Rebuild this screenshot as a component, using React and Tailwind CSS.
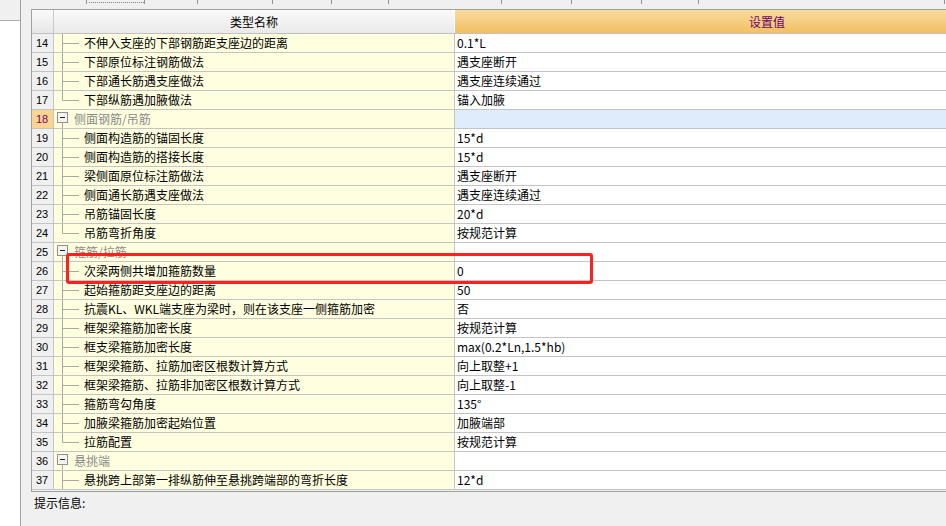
import React from 'react';

const rows = [
  { n: 14, name: '不伸入支座的下部钢筋距支座边的距离', value: '0.1*L' },
  { n: 15, name: '下部原位标注钢筋做法', value: '遇支座断开' },
  { n: 16, name: '下部通长筋遇支座做法', value: '遇支座连续通过' },
  { n: 17, name: '下部纵筋遇加腋做法', value: '锚入加腋', last: true },
  { n: 18, name: '侧面钢筋/吊筋', group: true, selected: true },
  { n: 19, name: '侧面构造筋的锚固长度', value: '15*d' },
  { n: 20, name: '侧面构造筋的搭接长度', value: '15*d' },
  { n: 21, name: '梁侧面原位标注筋做法', value: '遇支座断开' },
  { n: 22, name: '侧面通长筋遇支座做法', value: '遇支座连续通过' },
  { n: 23, name: '吊筋锚固长度', value: '20*d' },
  { n: 24, name: '吊筋弯折角度', value: '按规范计算', last: true },
  { n: 25, name: '箍筋/拉筋', group: true },
  { n: 26, name: '次梁两侧共增加箍筋数量', value: '0' },
  { n: 27, name: '起始箍筋距支座边的距离', value: '50' },
  { n: 28, name: '抗震KL、WKL端支座为梁时，则在该支座一侧箍筋加密', value: '否' },
  { n: 29, name: '框架梁箍筋加密长度', value: '按规范计算' },
  { n: 30, name: '框支梁箍筋加密长度', value: 'max(0.2*Ln,1.5*hb)' },
  { n: 31, name: '框架梁箍筋、拉筋加密区根数计算方式', value: '向上取整+1' },
  { n: 32, name: '框架梁箍筋、拉筋非加密区根数计算方式', value: '向上取整-1' },
  { n: 33, name: '箍筋弯勾角度', value: '135°' },
  { n: 34, name: '加腋梁箍筋加密起始位置', value: '加腋端部' },
  { n: 35, name: '拉筋配置', value: '按规范计算', last: true },
  { n: 36, name: '悬挑端', group: true },
  { n: 37, name: '悬挑跨上部第一排纵筋伸至悬挑跨端部的弯折长度', value: '12*d' },
];

const tabs = [66, 58, 53, 75, 59, 57, 113, 70, 70, 57, 246];

function ChildLines({ last }) {
  return (
    <svg width="30" height="18" className="shrink-0">
      <line x1="8.5" y1="0" x2="8.5" y2={last ? 9.5 : 18} stroke="#a8a8a8" />
      <line x1="8.5" y1="9.5" x2="25" y2="9.5" stroke="#a8a8a8" />
    </svg>
  );
}

function GroupBox() {
  return (
    <svg width="20" height="18" className="shrink-0">
      <rect x="3.5" y="2.5" width="10" height="10" fill="#f4f4f4" stroke="#909090" />
      <line x1="6" y1="7.5" x2="11" y2="7.5" stroke="#202020" />
      <line x1="8.5" y1="13" x2="8.5" y2="18" stroke="#a8a8a8" />
    </svg>
  );
}

export default function App() {
  return (
    <div
      className="relative w-[946px] h-[526px] flex overflow-hidden bg-[#f0f0f0] text-[12px] text-black"
      style={{ fontFamily: '"Noto Sans CJK SC", "Liberation Sans", sans-serif' }}
    >
      <div className="w-[21px] shrink-0 flex flex-col border-r border-[#a0a0a0]">
        <div className="h-[21px] bg-[#f0f0f0] border-b border-[#b0b0b0]" />
        <div className="flex-1 bg-white" />
      </div>

      <div className="flex-1 flex flex-col min-w-0">
        <div className="h-[9px] flex">
          {tabs.map((w, i) => (
            <div key={i} className="shrink-0 h-[4px] border-r border-[#909090]" style={{ width: w }}>
              {i === 1 && <div className="ml-[2px] mt-[1px] h-[2px] border-b border-dotted border-[#808080]" />}
            </div>
          ))}
        </div>

        <div className="ml-[10px] h-[483px] border-t border-l border-b border-[#a0a0a0] overflow-hidden">
          <div className="w-[1100px]">
            <div className="flex h-[24px] border-b border-[#c0c0c0]">
              <div className="w-[22px] shrink-0 border-r border-[#c8c8c8] bg-gradient-to-b from-[#fbfbfb] to-[#e6e6e6]" />
              <div className="w-[401px] shrink-0 border-r border-white flex items-center justify-center bg-gradient-to-b from-[#fbfbfb] to-[#e9e9e9]">
                类型名称
              </div>
              <div className="w-[624px] shrink-0 flex items-center justify-center text-[#6b006b] bg-gradient-to-b from-[#fadb9c] to-[#f0c062]">
                设置值
              </div>
            </div>

            {rows.map((r) => (
              <div key={r.n} className="flex h-[19px] border-b border-[#c4c4c4]">
                <div
                  className={`w-[22px] shrink-0 border-r border-[#c4c4c4] pl-[4px] flex items-center text-[11px] ${
                    r.selected ? 'bg-[#fbd492] text-[#7a0070]' : 'bg-[#f0f0f0]'
                  }`}
                  style={{ fontFamily: '"Liberation Sans", sans-serif' }}
                >
                  {r.n}
                </div>
                <div className="w-[401px] shrink-0 border-r border-[#c4c4c4] bg-[#ffffe0] flex items-center whitespace-nowrap overflow-hidden">
                  {r.group ? (
                    <>
                      <GroupBox />
                      <span className="text-[#8a8a8a] leading-[18px]">{r.name}</span>
                    </>
                  ) : (
                    <>
                      <ChildLines last={r.last} />
                      <span className="leading-[18px]">{r.name}</span>
                    </>
                  )}
                </div>
                <div
                  className={`w-[624px] shrink-0 pl-[2px] flex items-center whitespace-nowrap ${
                    r.selected ? 'bg-[#deecfc]' : 'bg-white'
                  }`}
                >
                  {r.value}
                </div>
              </div>
            ))}
          </div>
        </div>

        <div className="pl-[13px] pt-[2px]">提示信息:</div>
      </div>

      <div className="absolute left-[66px] top-[253px] w-[527px] h-[31px] border-[3px] border-[#ff2020] rounded-[3px] pointer-events-none" />
    </div>
  );
}
